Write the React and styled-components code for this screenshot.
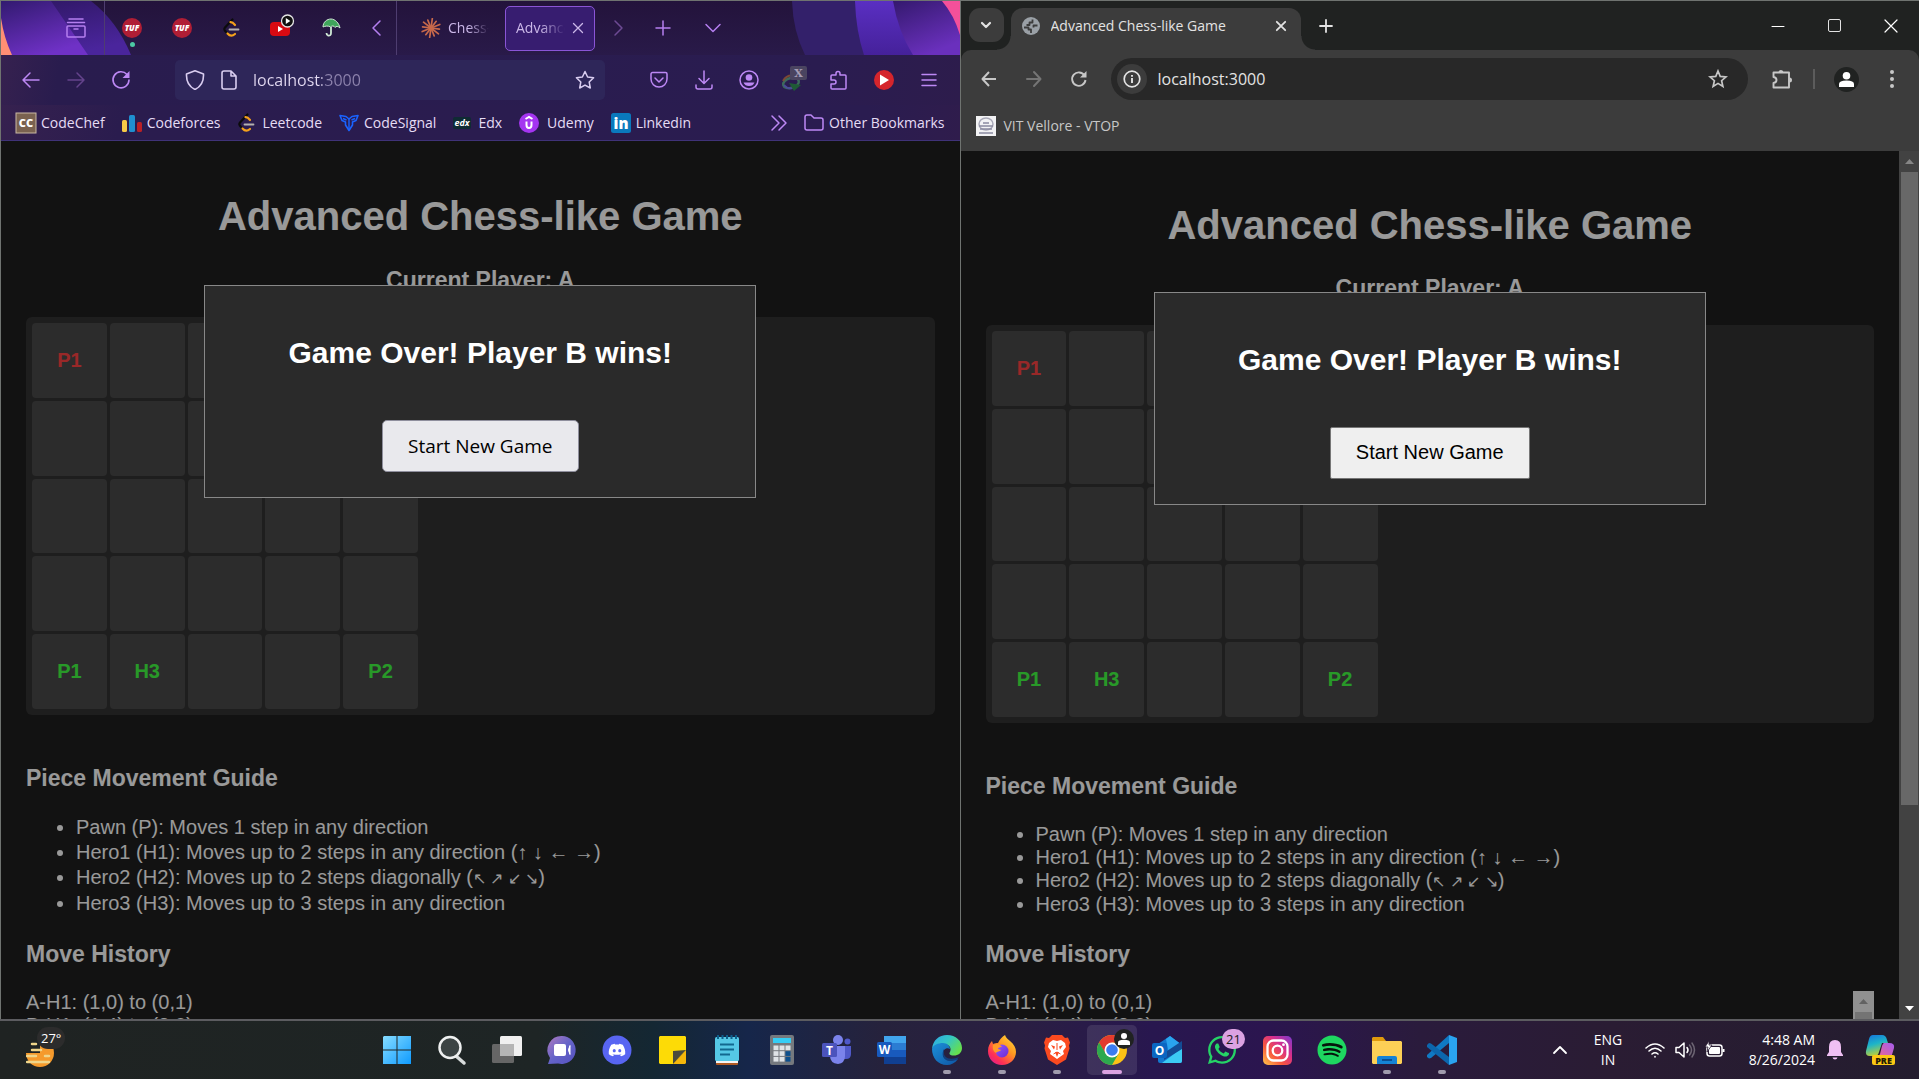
import React from "react";
import styled, { createGlobalStyle, css } from "styled-components";
import { FaDiscord, FaWhatsapp, FaSpotify } from "react-icons/fa";

const UI = `"Open Sans", "Noto Sans", sans-serif`;
const ARIAL = `"Liberation Sans", Arial, sans-serif`;

const GlobalStyle = createGlobalStyle`
  *, *::before, *::after { box-sizing: border-box; }
  body { margin: 0; background: #121212; overflow: hidden; }
  button, input { font-family: inherit; }
`;

/* ---------- desktop ---------- */

const Desktop = styled.div`
  display: flex;
  flex-direction: column;
  height: 100vh;
  font-family: ${UI};
`;

const Windows = styled.div`
  flex: 1;
  min-height: 0;
  display: grid;
  grid-template-columns: minmax(0, 1fr) minmax(0, 1fr);
  border-bottom: 2px solid #5c5c60;
`;

const Window = styled.section`
  display: flex;
  flex-direction: column;
  min-width: 0;
  min-height: 0;
  border-top: 1px solid #6f7370;
  border-left: 1px solid #6f7370;
`;

const IconButton = styled.button`
  display: flex;
  align-items: center;
  justify-content: center;
  flex: none;
  width: ${(p) => p.$w || 45}px;
  height: ${(p) => p.$h || 40}px;
  padding: 0;
  border: 0;
  background: none;
  color: ${(p) => p.$color || "inherit"};
  svg { display: block; overflow: visible; }
`;

const Spacer = styled.div`
  flex: 1;
`;

/* ---------- purple browser ---------- */

const FoxTabs = styled.div`
  position: relative;
  display: flex;
  align-items: center;
  height: 54px;
  background: linear-gradient(#23133b, #291a49);
  color: #b57ff0;
`;

const FoxArt = styled.svg`
  position: absolute;
  top: 0;
  ${(p) => (p.$side === "left" ? "left: 0;" : "right: 0;")}
  pointer-events: none;
`;

const FoxLead = styled.div`
  display: flex;
  justify-content: flex-end;
  width: 104px;
  height: 54px;
  align-items: center;
  padding-right: 6px;
  margin-right: 2px;
  border-right: 1px solid #4e3d70;
  position: relative;
`;

const Pinned = styled(IconButton)`
  position: relative;
  width: 50px;
  height: 54px;
`;

const PinDot = styled.span`
  position: absolute;
  left: 23px;
  bottom: 8px;
  width: 5px;
  height: 5px;
  border-radius: 50%;
  background: #4cc9a4;
`;

const TabDivider = styled.div`
  width: 1px;
  height: 54px;
  background: #4e3d70;
`;

const FoxTab = styled.button`
  position: relative;
  display: flex;
  align-items: center;
  gap: 7px;
  flex: none;
  height: 45px;
  width: 90px;
  padding: 0 10px;
  border-radius: 5px;
  border: 1px solid ${(p) => (p.$active ? "#8a55d6" : "transparent")};
  background: ${(p) => (p.$active ? "#371d70" : "none")};
  color: #cbb8e8;
  font-size: 14px;
  line-height: 20px;
  margin-left: ${(p) => (p.$active ? 0 : 13)}px;
  margin-right: ${(p) => (p.$active ? 0 : 5)}px;
  svg { flex: none; }
`;

const FadeLabel = styled.span`
  flex: 1;
  min-width: 0;
  overflow: hidden;
  white-space: nowrap;
  text-align: left;
  mask-image: linear-gradient(to right, #000 50%, transparent 100%);
`;

const FoxNav = styled.div`
  display: flex;
  align-items: center;
  height: 50px;
  padding: 0 8px 0 7px;
  background: linear-gradient(100deg, #36214f 0, #291c4e 60px, #2a1c50 85%, #2d1c4c);
  color: #bd88f5;
`;

const FoxUrl = styled.label`
  display: flex;
  align-items: center;
  flex: 1;
  min-width: 0;
  height: 40px;
  margin: 0 32px;
  padding: 0 10px;
  gap: 16px;
  border-radius: 5px;
  background: #2e2659;
  color: #d9cdf0;
  svg { flex: none; }
`;

const Address = styled.input`
  flex: 1;
  min-width: 0;
  padding: 0;
  border: 0;
  outline: 0;
  background: none;
  color: ${(p) => p.$color};
  font-size: 16px;
  line-height: 24px;
`;

const FoxAddress = styled(Address)`
  background: linear-gradient(to right, #e3daf2 69px, #8d83ad 69px);
  background-clip: text;
  -webkit-background-clip: text;
  -webkit-text-fill-color: transparent;
`;

const FoxMarks = styled.nav`
  display: flex;
  align-items: center;
  gap: 17px;
  height: 36px;
  padding: 0 15px;
  background: linear-gradient(100deg, #36214f 0, #2a1c4e 120px, #2a1c50 90%, #2f1c4c);
  border-bottom: 1px solid #3f3278;
`;

const Bookmark = styled.a`
  display: flex;
  align-items: center;
  gap: ${(p) => p.$gap || 5}px;
  color: ${(p) => p.$color || "#e6dcf5"};
  font-size: 14px;
  line-height: 20px;
  white-space: nowrap;
  text-decoration: none;
  svg { flex: none; overflow: visible; }
`;

/* ---------- grey browser ---------- */

const ChromeTabs = styled.div`
  display: flex;
  align-items: flex-end;
  height: 49px;
  padding-left: 8px;
  background: #202221;
  color: #e3e3e3;
`;

const TabSearch = styled(IconButton)`
  width: 35px;
  height: 34px;
  margin-bottom: 8px;
  border-radius: 11px;
  background: #3c3c3c;
`;

const ChromeTab = styled.div`
  position: relative;
  display: flex;
  align-items: center;
  gap: 11px;
  width: 290px;
  height: 42px;
  margin: 0 7px;
  padding: 0 5px 6px 11px;
  border-radius: 12px 12px 0 0;
  background: #3c3c3c;
  font-size: 14px;
  line-height: 20px;
  svg { flex: none; }
  &::before,
  &::after {
    content: "";
    position: absolute;
    bottom: 0;
    width: 14px;
    height: 14px;
  }
  &::before {
    left: -14px;
    background: radial-gradient(circle at 0 0, transparent 13px, #3c3c3c 14px);
  }
  &::after {
    right: -14px;
    background: radial-gradient(circle at 100% 0, transparent 13px, #3c3c3c 14px);
  }
`;

const TabTitle = styled.span`
  flex: 1;
  min-width: 0;
  overflow: hidden;
  white-space: nowrap;
`;

const ChromeTop = styled.div`
  background: #202221;
`;

const ChromeNav = styled.div`
  display: flex;
  align-items: center;
  height: 58px;
  padding: 0 5px 0 6px;
  border-radius: 10px 10px 0 0;
  background: #3c3c3c;
  color: #c7c7c7;
`;

const Omnibox = styled.label`
  display: flex;
  align-items: center;
  flex: 1;
  min-width: 0;
  height: 42px;
  margin: 0 11px 0 9px;
  padding: 0 20px 0 6px;
  gap: 11px;
  border-radius: 21px;
  background: #282828;
  svg { flex: none; }
`;

const InfoDot = styled.span`
  display: flex;
  align-items: center;
  justify-content: center;
  width: 30px;
  height: 30px;
  border-radius: 50%;
  background: #3c3c3c;
  color: #e3e3e3;
`;

const NavDivider = styled.div`
  width: 2px;
  height: 20px;
  margin: 0 9px;
  background: #5c5c5c;
`;

const Avatar = styled.span`
  display: flex;
  align-items: center;
  justify-content: center;
  width: 25px;
  height: 25px;
  border-radius: 50%;
  background: #202221;
`;

const ChromeMarks = styled.nav`
  display: flex;
  align-items: center;
  height: 43px;
  padding: 0 15px 7px;
  background: #3c3c3c;
`;

/* ---------- game page ---------- */

const Viewport = styled.div`
  display: flex;
  flex: 1;
  min-height: 0;
  background: #1e1e1e;
`;

const PageArea = styled.main`
  position: relative;
  flex: 1;
  min-width: 0;
  overflow: hidden;
  padding: ${(p) => (p.$fox ? 26 : 25)}px 25px 25px;
  color: #fff;
  font-family: ${ARIAL};
  font-size: 20px;
  line-height: ${(p) => (p.$fox ? 25 : 23)}px;
`;

const Title = styled.h1`
  margin: 26px 0 27px;
  font-size: 40px;
  line-height: 46px;
  text-align: center;
`;

const Turn = styled.h3`
  margin: 27px 0 23px;
  font-size: 23px;
  line-height: ${(p) => (p.$fox ? 28 : 27)}px;
  text-align: center;
`;

const Board = styled.div`
  padding: 6px;
  border-radius: 6px;
  background: #333;
`;

const Cells = styled.div`
  display: grid;
  grid-template-columns: repeat(5, 1fr);
  grid-template-rows: repeat(5, 1fr);
  gap: 3px;
  width: 386px;
  height: 386px;
`;

const Cell = styled.div`
  display: flex;
  align-items: center;
  justify-content: center;
  border-radius: 4px;
  background: #4a4a4a;
  color: ${(p) => (p.$team === "A" ? "#ff4444" : "#44ff44")};
  font-weight: bold;
`;

const Heading = styled.h3`
  margin: 23px 0;
  font-size: 23px;
  line-height: 27px;
`;

const Guide = styled.section`
  margin-top: 50px;
`;

const Rules = styled.ul`
  margin: 23px 0 25px;
  padding-left: 50px;
`;

const Arrows = styled.span`
  font-size: 16px;
`;

const History = styled.div`
  display: flex;
  justify-content: space-between;
  height: 250px;
`;

const Moves = styled.div`
  line-height: 23px;
`;

const Overlay = styled.div`
  position: absolute;
  inset: 0;
  background: rgba(0, 0, 0, 0.4);
`;

const Modal = styled.div`
  width: 552px;
  max-width: 90%;
  margin: 15% auto 0;
  padding: 25px;
  border: 1px solid #888;
  background: #2a2a2a;
  text-align: center;
`;

const ModalTitle = styled.h2`
  margin: 25px 0;
  font-size: 30px;
  line-height: 34px;
`;

const Restart = styled.button`
  height: 52px;
  margin-top: 25px;
  padding: 0 25px;
  color: #000;
  font-size: 20px;
  ${(p) =>
    p.$fox
      ? css`
          border: 1px solid #8f8f9d;
          border-radius: 5px;
          background: #e9e9ed;
          font-family: ${UI};
          font-size: 19px;
        `
      : css`
          border: 1px solid #767676;
          border-radius: 2px;
          background: #efefef;
          font-family: ${ARIAL};
        `}
`;

const Track = styled.div`
  display: flex;
  flex-direction: column;
  align-items: center;
  flex: none;
  width: ${(p) => p.$w || 20}px;
  background: ${(p) => p.$bg};
`;

const Thumb = styled.div`
  flex: ${(p) => p.$grow};
  width: 17px;
  background: ${(p) => p.$bg};
`;

const ArrowCap = styled.div`
  display: flex;
  align-items: center;
  justify-content: center;
  height: 21px;
`;

/* ---------- taskbar ---------- */

const Taskbar = styled.footer`
  display: flex;
  align-items: center;
  height: 58px;
  padding: 0 14px 0 20px;
  color: #fff;
  background: linear-gradient(
    90deg,
    #1f2322 0,
    #1e2525 28%,
    #142733 34%,
    #16264a 39%,
    #26223c 46%,
    #2a1f42 53%,
    #28174f 60%,
    #2b154f 66%,
    #2a1b3c 74%,
    #2a1c33 84%,
    #241d2f 100%
  );
`;

const Weather = styled.button`
  position: relative;
  width: 352px;
  height: 50px;
  padding: 4px 0 0 6px;
  border: 0;
  background: none;
  text-align: left;
`;

const Temp = styled.span`
  position: absolute;
  left: 17px;
  top: 2px;
  padding: 1px 4px;
  border-radius: 12px;
  background: #2c2c2c;
  color: #fff;
  font-size: 13px;
  line-height: 20px;
`;

const Apps = styled.div`
  display: flex;
  gap: 5px;
`;

const AppButton = styled.button`
  position: relative;
  display: flex;
  align-items: center;
  justify-content: center;
  width: 50px;
  height: 50px;
  padding: 0;
  border: 0;
  border-radius: 5px;
  background: ${(p) => (p.$state === "active" ? "rgba(255,255,255,.1)" : "none")};
  svg { display: block; overflow: visible; }
  &::after {
    content: "";
    position: absolute;
    bottom: 1px;
    display: ${(p) => (p.$state ? "block" : "none")};
    width: ${(p) => (p.$state === "active" ? 20 : 8)}px;
    height: 4px;
    border-radius: 2px;
    background: ${(p) => (p.$state === "active" ? "#dba2e2" : "#a09bad")};
  }
`;

const Badge = styled.span`
  position: absolute;
  top: 4px;
  right: 2px;
  width: 23px;
  height: 20px;
  border-radius: 10px;
  background: #dba2e2;
  color: #1b1b1b;
  font-size: 13px;
  line-height: 20px;
`;

const AvatarBadge = styled(Badge)`
  display: flex;
  align-items: center;
  justify-content: center;
  right: 3px;
  width: 20px;
  background: #202221;
`;

const Tray = styled.div`
  display: flex;
  align-items: center;
  gap: 10px;
`;

const TrayText = styled.div`
  width: ${(p) => p.$w}px;
  margin-right: ${(p) => p.$after || 0}px;
  font-size: 14px;
  line-height: 20px;
  text-align: ${(p) => p.$align || "center"};
`;

/* ---------- drawings ---------- */

const Svg = ({ s = 20, w, h, v, children, ...rest }) => (
  <svg width={w || s} height={h || s} viewBox={v || `0 0 ${w || s} ${h || s}`} fill="none" aria-hidden="true" {...rest}>
    {children}
  </svg>
);

const Line = ({ d, s = 20, sw = 1.5, ...rest }) => (
  <Svg s={s} stroke="currentColor" strokeWidth={sw} strokeLinecap="round" strokeLinejoin="round" {...rest}>
    <path d={d} />
  </Svg>
);

const Tuf = () => (
  <Svg s={20}>
    <circle cx="10" cy="10" r="10" fill="#b01e35" />
    <text x="10" y="13" textAnchor="middle" fontFamily="Open Sans" fontStyle="italic" fontWeight="800" fontSize="8" fill="#fff">TUF</text>
  </Svg>
);

const Leet = () => (
  <Svg s={20} strokeLinecap="round" strokeWidth="2.2">
    <path d="M10.500 1.500 2.800 9.700Q1.700 11 2.800 12.500L5.500 15.500" stroke="#0b0b0b" />
    <path d="M8.500 4.200Q10.500 4 13 7" stroke="#f5a11c" />
    <path d="M5.500 15.500Q9 19.500 13 16" stroke="#f5a11c" />
    <path d="M7.500 11.500H16.500" stroke="#b3b1b0" strokeWidth="1.800" />
  </Svg>
);

const Youtube = () => (
  <Svg w={24} h={22} v="0 3 24 22">
    <rect x="0" y="8" width="20" height="14" rx="4" fill="#d90a12" />
    <path d="M8 12v6l5-3z" fill="#fff" />
    <circle cx="17.500" cy="7" r="6" fill="#101010" stroke="#e5e5e5" strokeWidth="1.300" />
    <path d="M15.800 4v6l4.500-3z" fill="#fff" />
  </Svg>
);

const Umbrella = () => (
  <Svg s={20}>
    <path d="M1 9C1 4 5 1 9 1s8 4 9 9c-2-2-4-2-5-.5-1-2-3-2-4.500-.5C6.500 7.500 3 8 1 9z" fill="#3fa45b" stroke="#cfe8d5" strokeWidth="1" />
    <path d="M9 9v6q0 3-3 2.500-1.500-.5-1.500-2.500" stroke="#cfe8d5" strokeWidth="1.800" />
  </Svg>
);

const Burst = () => (
  <Svg s={20} stroke="#c8694b" strokeWidth="1.700" strokeLinecap="round">
    {Array.from({ length: 12 }, (_, i) => (
      <path key={i} d={i % 2 ? "M10 10V1.500" : "M10 10V.5"} transform={`rotate(${i * 30 + 8} 10 10)`} />
    ))}
  </Svg>
);

const Idm = () => (
  <Svg w={26} h={28}>
    <ellipse cx="10" cy="17" rx="8" ry="5" stroke="#3c6a5c" strokeWidth="2.500" transform="rotate(-15 10 17)" />
    <path d="M2 15q4-7 12-5" stroke="#7b4a35" strokeWidth="2" />
    <path d="M3 19q3 4 8 3" stroke="#4a4a9a" strokeWidth="2" />
    <path d="M8 17l12 2-7 6z" fill="#1f5a36" />
    <rect x="9" y="0" width="17" height="14" rx="2" fill="#4a4460" />
    <text x="17.500" y="11" textAnchor="middle" fontFamily="DejaVu Serif" fontWeight="700" fontSize="11" fill="#a49cb5">X</text>
  </Svg>
);

const puzzleFox = "M7 5V3.500a2 2 0 0 1 4 0V5h5a1 1 0 0 1 1 1v12a1 1 0 0 1-1 1H3a1 1 0 0 1-1-1v-4h3a2 2 0 0 0 0-4H2V6a1 1 0 0 1 1-1z";
const starPath = "M10 1.500l2.600 5.500 6 .8-4.400 4.200 1.100 6-5.300-2.900L4.700 18l1.100-6L1.400 7.800l6-.8z";

const ChromeStar = () => (
  <Svg s={20}>
    <path d="M10 2l2.200 5.400 5.800.5-4.400 3.800 1.300 5.700-4.900-3-4.900 3 1.300-5.700L2 7.900l5.800-.5z" stroke="currentColor" strokeWidth="1.700" />
  </Svg>
);

const Person = ({ s = 15 }) => (
  <Svg s={s} v="0 0 15 15">
    <circle cx="7.500" cy="3.800" r="3.800" fill="#fff" />
    <path d="M0 15v-3q0-3.500 7.500-3.500T15 12v3z" fill="#fff" />
  </Svg>
);

const Triangle = ({ color, down }) => (
  <Svg w={9} h={5}><path d={down ? "M0 0h9L4.500 5z" : "M0 5h9L4.500 0z"} fill={color} /></Svg>
);

const Win = () => (
  <Svg s={28}>
    <defs><linearGradient id="win" x1="0" y1="0" x2="1" y2="1"><stop stopColor="#86dcff" /><stop offset="1" stopColor="#0f9bff" /></linearGradient></defs>
    <path d="M1 0h12.500v13.500H0V1zM14.500 0H28v13.500H14.500zM0 14.500h13.500V28H0zM14.500 14.500H28V28H14.500z" fill="url(#win)" />
  </Svg>
);

const Search = () => (
  <Svg s={28}>
    <path d="M18 20l8 7" stroke="#d8dcdc" strokeWidth="3.500" strokeLinecap="round" />
    <circle cx="12" cy="11.500" r="10.500" fill="#3c4444" stroke="#eef0f0" strokeWidth="2.500" />
  </Svg>
);

const TaskView = () => (
  <Svg s={30}>
    <rect x="0" y="9" width="22" height="19" rx="1.500" fill="#666" />
    <rect x="8" y="1" width="22" height="20" rx="1.500" fill="#f0f0f0" />
    <path d="M8 9h14v12H8z" fill="#b5b5b5" />
  </Svg>
);

const Chat = () => (
  <Svg s={28}>
    <defs><linearGradient id="chat" x1="0" y1="0" x2="1" y2="1"><stop stopColor="#b07ac0" /><stop offset=".5" stopColor="#6463c8" /><stop offset="1" stopColor="#5651c0" /></linearGradient></defs>
    <path d="M14 0a14 14 0 1 1-4 27.500L0 28l2-6A14 14 0 0 1 14 0z" fill="url(#chat)" />
    <rect x="6" y="8" width="12" height="12" rx="2" fill="#fff" />
    <path d="M22 9.500v9q-3-4.500 0-9z" fill="#fff" stroke="#fff" />
  </Svg>
);

const DiscordRound = () => (
  <Svg s={30}>
    <circle cx="15" cy="15" r="14.500" fill="#5865f2" />
    <FaDiscord x="6" y="6" size={18} color="#fff" />
  </Svg>
);

const Sticky = () => (
  <Svg w={27} h={28}>
    <path d="M1 0h25l1 1v13L14 28H1l-1-1V1z" fill="#fddb06" />
    <path d="M14 28V15l13-1z" fill="#4a4a3c" />
    <path d="M27 14v13l-1 1H14z" fill="#f5b70a" />
  </Svg>
);

const Notepad = () => (
  <Svg w={24} h={30}>
    <rect x="1" y="25" width="22" height="5" rx="1" fill="#b05a24" />
    <rect x="1" y="24" width="22" height="4" fill="#f4f4f4" />
    <rect x="0" y="2" width="24" height="24" rx="1.500" fill="#55c8e6" />
    <path d="M3 0v4M7.500 0v4M12 0v4M16.500 0v4M21 0v4" stroke="#0e5f8c" strokeWidth="2" />
    <path d="M5 9.500h14M5 14.500h14M5 19.500h10" stroke="#12688f" strokeWidth="2" />
  </Svg>
);

const Calc = () => (
  <Svg w={24} h={30}>
    <rect width="24" height="30" rx="2" fill="#75797e" />
    <rect x="3" y="3" width="18" height="5" fill="#35cdf5" />
    {[0, 1, 2].map((r) => [0, 1, 2].map((c) => <rect key={`${r}${c}`} x={3.500 + c * 6} y={10.500 + r * 5.700} width="5" height="4.700" fill={c === 2 && r ? "#0d4f8c" : "#dfe3e6"} />))}
  </Svg>
);

const Letter = ({ x, y, c }) => (
  <text x={x} y={y} textAnchor="middle" fontFamily="Open Sans" fontWeight="700" fontSize="12" fill="#fff">{c}</text>
);

const Teams = () => (
  <Svg s={30}>
    <circle cx="16" cy="5" r="5" fill="#7b83eb" />
    <circle cx="25.500" cy="6.500" r="3" fill="#5059c9" />
    <path d="M21 11h8v8q0 5-5 5h-3z" fill="#5059c9" />
    <path d="M8 11h15v10q0 7-7 8-8-1-8-8z" fill="#7b83eb" />
    <rect x="0" y="8" width="15" height="14" rx="1.500" fill="#4b53bc" />
    <Letter x={7.500} y={19.500} c="T" />
  </Svg>
);

const Word = () => (
  <Svg s={30}>
    <rect x="7" y="1" width="22" height="8" fill="#41a5ee" />
    <rect x="7" y="8" width="22" height="7" fill="#2b7cd3" />
    <rect x="7" y="15" width="22" height="7" fill="#185abd" />
    <rect x="7" y="22" width="22" height="7" fill="#103f91" />
    <rect x="0" y="7" width="15" height="15" rx="1.500" fill="#185abd" />
    <Letter x={7.500} y={19} c="W" />
  </Svg>
);

const Edge = () => (
  <Svg s={30}>
    <defs>
      <linearGradient id="edgeA" x1="0" y1="0" x2="1" y2=".6"><stop stopColor="#2fa4e7" /><stop offset=".5" stopColor="#33c6c6" /><stop offset="1" stopColor="#66df4e" /></linearGradient>
      <linearGradient id="edgeB" x1="0" y1="0" x2="1" y2="1"><stop stopColor="#1c90d8" /><stop offset="1" stopColor="#0f55a5" /></linearGradient>
    </defs>
    <path d="M0 14C1 5 7 0 15 0c9 0 15 6 15 13 0 5-4 7.500-8 7.500-5 0-5-2-4-3.500 2-4-1-8-6-8-6 0-11 2-12 5z" fill="url(#edgeA)" />
    <path d="M0 14c1-4 6-6 11-6 4 0 7 3 7 6-3-2-7 0-7 5 0 6 7 8 15 5-3 4-7 6-11 6C6 30 0 23 0 14z" fill="url(#edgeB)" />
    <path d="M12 14c-3 5-1 12 6 12 4 0 7-1 9-4-7 3-14 2-15-3z" fill="#123f7d" />
  </Svg>
);

const Firefox = () => (
  <Svg s={30}>
    <defs>
      <linearGradient id="ffA" x1="1" y1="0" x2=".2" y2="1"><stop stopColor="#ffe63c" /><stop offset=".45" stopColor="#ff9520" /><stop offset=".8" stopColor="#ff2f55" /><stop offset="1" stopColor="#e0208a" /></linearGradient>
      <linearGradient id="ffB" x1="0" y1="0" x2="1" y2="1"><stop stopColor="#9058ff" /><stop offset="1" stopColor="#6d2bd0" /></linearGradient>
    </defs>
    <path d="M18 0c1 3 3 4 5 6 4 3 6 7 6 11 0 7-6 13-14 13S1 24 1 16c0-5 2-8 4-10l1 3c2-1 3-1 5-1 2-4 4-6 7-8z" fill="url(#ffA)" />
    <circle cx="15" cy="16" r="6.500" fill="url(#ffB)" />
    <path d="M6 10c3-2 7-1 9 2-3 0-4 1-4 2l3 1c-1 2-4 1-5 3-2-1-4-4-3-8z" fill="#ff9a28" />
  </Svg>
);

const Brave = () => (
  <Svg w={26} h={30}>
    <path d="M8 0h10l3 3 3-.500 2 5-1 3 .500 3-3.500 11L13 30 4 24.500.500 13.500l.500-3-1-3 2-5L5 3z" fill="#fb4a20" />
    <path d="M9 5l4 1 4-1 4 3 1 4-3 4 1 3-7 5-7-5 1-3-3-4 1-4z" fill="#fff" />
    <path d="M7 10l4 1.500-1 3zM19 10l-4 1.500 1 3zM11 17h4l-2 5z" fill="#fb4a20" />
    <path d="M13 8v7M9.500 19l3.500-2 3.500 2" stroke="#fb4a20" />
  </Svg>
);

const ChromeLogo = () => (
  <Svg s={30}>
    <circle cx="15" cy="15" r="15" fill="#fbc116" />
    <path d="M2 7.500A15 15 0 0 1 28 7.500H15L8.500 19z" fill="#e33b2e" />
    <path d="M2 7.500A15 15 0 0 0 15 30l6.500-11.200L9 19z" fill="#2da94f" />
    <circle cx="15" cy="15" r="7.500" fill="#fff" />
    <circle cx="15" cy="15" r="5.800" fill="#3b7cf0" />
  </Svg>
);

const Outlook = () => (
  <Svg s={30}>
    <path d="M6 9 18 1l12 9v16q0 2-2 2H8q-2 0-2-2z" fill="#1278cf" />
    <path d="M14 4l4-3 12 9-13 9z" fill="#2aa4ee" />
    <path d="M30 11v15q0 2-2 2H10l20-15z" fill="#3ccbf4" />
    <path d="M12 18l18-12v8L12 25z" fill="#134b94" />
    <rect x="0" y="8" width="15" height="15" rx="2" fill="#0a66c2" />
    <Letter x={7.500} y={20} c="O" />
  </Svg>
);

const Insta = () => (
  <Svg s={29}>
    <defs><linearGradient id="ig" x1="0" y1="1" x2="1" y2="0"><stop stopColor="#ffc94a" /><stop offset=".35" stopColor="#f8573c" /><stop offset=".65" stopColor="#d62e8c" /><stop offset="1" stopColor="#7a3ad0" /></linearGradient></defs>
    <rect width="29" height="29" rx="5" fill="url(#ig)" />
    <rect x="4.500" y="4.500" width="20" height="20" rx="6" stroke="#fff" strokeWidth="2.300" />
    <circle cx="14.500" cy="14.500" r="4.800" stroke="#fff" strokeWidth="2.300" />
    <circle cx="20.500" cy="8.700" r="1.400" fill="#fff" />
  </Svg>
);

const SpotifyRound = () => (
  <Svg s={30}>
    <circle cx="15" cy="15" r="13" fill="#06150b" />
    <FaSpotify x="0" y="0" size={30} color="#1ed760" />
  </Svg>
);

const Folder = () => (
  <Svg w={30} h={28}>
    <path d="M1 1h10l3 4h-14V2z" fill="#e09a0c" />
    <path d="M0 5h29l1 1v21l-1 1H1l-1-1z" fill="#fdd056" />
    <path d="M5 28v-6q0-2 2-2h16q2 0 2 2v6z" fill="#1583d6" />
    <path d="M10 24h10" stroke="#0b4f93" strokeWidth="2" />
  </Svg>
);

const Code = () => (
  <Svg s={30}>
    <path d="M0 20 22 0v8L4 23l-2 .5L0 22z" fill="#1079c4" />
    <path d="M0 10l2-2 2 .5L22 22v8L0 12z" fill="#0c66ad" />
    <path d="M22 0l8 3v24l-8 3z" fill="#2aa4f0" />
  </Svg>
);

const Copilot = () => (
  <Svg w={30} h={30}>
    <defs>
      <linearGradient id="cpA" x1="0" y1="0" x2=".3" y2="1"><stop stopColor="#1673dd" /><stop offset=".5" stopColor="#1db5c8" /><stop offset="1" stopColor="#b8cf3b" /></linearGradient>
      <linearGradient id="cpB" x1="1" y1="0" x2="0" y2="1"><stop stopColor="#a45cf0" /><stop offset="1" stopColor="#f06a8a" /></linearGradient>
    </defs>
    <path d="M8 0h9q4 0 5 5l1 3h-6l-3 9q-1 4-4 4H5q-5 0-4-5L4 4q1-4 4-4z" fill="url(#cpA)" />
    <path d="M19 8h5q6 0 5 5l-3 10H11q3-1 4-4l2-8q1-3 2-3z" fill="url(#cpB)" />
    <rect x="7" y="20" width="23" height="10" rx="2" fill="#fbc814" />
    <text x="18.500" y="28.500" textAnchor="middle" fontFamily="Open Sans" fontWeight="800" fontSize="9" fill="#241d05">PRE</text>
  </Svg>
);

/* ---------- data ---------- */

const bookmarks = [
  ["CodeChef", <Svg s={20}><rect width="20" height="20" fill="#7a6250" stroke="#c9b8a3" /><text x="10" y="14" textAnchor="middle" fontFamily="Open Sans" fontWeight="800" fontSize="11" fill="#fff">CC</text></Svg>],
  ["Codeforces", <Svg s={20}><rect x="0" y="7" width="5" height="12" rx="1.500" fill="#f6c947" /><rect x="7" y="2" width="6" height="17" rx="1.500" fill="#1f8fd0" /><rect x="15" y="9" width="5" height="10" rx="1.500" fill="#b92026" /></Svg>],
  ["Leetcode", <Leet />],
  ["CodeSignal", <Svg s={20}><path d="M1 2.500l6 1 3 2.500 3-2.500 6-1-2 5-3.500 1.500V12L10 17.500 6.500 12V9L3 7.500z" stroke="#1a63ff" strokeWidth="1.600" strokeLinejoin="round" /><path d="M4 5.500l3.500 1.500M16 5.500l-3.500 1.500M10 6v10" stroke="#1a63ff" strokeWidth="1.400" /></Svg>],
  ["Edx", <Svg s={20}><rect y="4" width="18" height="12" rx="2" fill="#0f2b33" /><text x="9" y="13" textAnchor="middle" fontFamily="Open Sans" fontStyle="italic" fontWeight="700" fontSize="9" fill="#fff">edx</text></Svg>],
  ["Udemy", <Svg s={20}><circle cx="10" cy="10" r="10" fill="#a435f0" /><path d="M6.500 6 10 4l3.500 2M7.500 8.500V12q0 3 2.500 3t2.500-3V8.500" stroke="#fff" strokeWidth="2" /></Svg>, 8],
  ["Linkedin", <Svg s={20}><rect width="20" height="20" rx="2.500" fill="#0a79bd" /><text x="10" y="16" textAnchor="middle" fontFamily="Open Sans" fontWeight="800" fontSize="15" fill="#fff">in</text></Svg>],
];

const pieces = {
  0: ["A", "P1"],
  20: ["B", "P1"],
  21: ["B", "H3"],
  24: ["B", "P2"],
};

const rules = [
  ["Pawn (P): Moves 1 step in any direction"],
  ["Hero1 (H1): Moves up to 2 steps in any direction (↑ ↓ ← →)"],
  ["Hero2 (H2): Moves up to 2 steps diagonally (", "↖ ↗ ↙ ↘", ")"],
  ["Hero3 (H3): Moves up to 3 steps in any direction"],
];

const apps = [
  ["Start", <Win />],
  ["Search", <Search />],
  ["Task view", <TaskView />],
  ["Chat", <Chat />],
  ["Discord", <DiscordRound />],
  ["Sticky Notes", <Sticky />],
  ["Notepad", <Notepad />],
  ["Calculator", <Calc />],
  ["Teams", <Teams />],
  ["Word", <Word />],
  ["Edge", <Edge />, "open"],
  ["Firefox", <Firefox />, "open"],
  ["Brave", <Brave />, "open"],
  ["Chrome", <><ChromeLogo /><AvatarBadge><Person s={12} /></AvatarBadge></>, "active"],
  ["Outlook", <Outlook />],
  ["WhatsApp", <><FaWhatsapp size={32} color="#25d366" /><Badge>21</Badge></>],
  ["Instagram", <Insta />],
  ["Spotify", <SpotifyRound />],
  ["File Explorer", <Folder />, "open"],
  ["Visual Studio Code", <Code />, "open"],
];

/* ---------- parts ---------- */

function GamePage({ fox }) {
  return (
    <PageArea $fox={fox}>
      <Title>Advanced Chess-like Game</Title>
      <Turn $fox={fox}>Current Player: A</Turn>
      <Board>
        <Cells>
          {Array.from({ length: 25 }, (_, i) => (
            <Cell key={i} $team={pieces[i]?.[0]}>{pieces[i]?.[1]}</Cell>
          ))}
        </Cells>
      </Board>
      <Guide>
        <Heading>Piece Movement Guide</Heading>
        <Rules>
          {rules.map(([text, arrows, end]) => (
            <li key={text}>{text}{arrows && <Arrows>{arrows}</Arrows>}{end}</li>
          ))}
        </Rules>
      </Guide>
      <Heading>Move History</Heading>
      <History>
        <Moves>
          <div>A-H1: (1,0) to (0,1)</div>
          <div>B-H1: (1,4) to (2,0)</div>
        </Moves>
        {!fox && (
          <Track $w={21} $bg="#f1f1f1">
            <ArrowCap><Triangle color="#a3a3a3" /></ArrowCap>
            <Thumb $grow={1} $bg="#c1c1c1" />
          </Track>
        )}
      </History>
      <Overlay>
        <Modal role="dialog" aria-label="Game over">
          <ModalTitle>Game Over! Player B wins!</ModalTitle>
          <Restart $fox={fox}>Start New Game</Restart>
        </Modal>
      </Overlay>
    </PageArea>
  );
}

function FoxWindow() {
  return (
    <Window>
      <FoxTabs>
        <FoxArt $side="left" width="140" height="54">
          <defs>
            <linearGradient id="fa" x1="0" y1="0" x2=".5" y2="1"><stop stopColor="#321a70" /><stop offset="1" stopColor="#6f31c6" /></linearGradient>
            <linearGradient id="fb" x1="0" y1="0" x2=".5" y2="1"><stop stopColor="#2d1660" /><stop offset="1" stopColor="#4a259c" /></linearGradient>
          </defs>
          <path d="M0 0h90q26 20 40 54H0z" fill="url(#fb)" />
          <path d="M0 0h50l37 54H0z" fill="url(#fa)" />
          <path d="M0 17q3 20 11 37H0z" fill="#ff8f74" />
        </FoxArt>
        <FoxArt $side="right" width="170" height="54">
          <defs>
            <linearGradient id="fc" x1="0" y1="0" x2=".5" y2="1"><stop stopColor="#34196e" /><stop offset="1" stopColor="#6a30bd" /></linearGradient>
            <linearGradient id="fd" x1="0" y1="0" x2="0" y2="1"><stop stopColor="#5a2fc2" /><stop offset="1" stopColor="#45219a" /></linearGradient>
          </defs>
          <path d="M2 0q1 30 13 54h155V0z" fill="#33206a" />
          <path d="M65 0q1 30 9 54h96V0z" fill="url(#fd)" />
          <path d="M103 0q5 30 20 54h47V0z" fill="url(#fc)" />
          <path d="M152 0q12 14 18 34V0z" fill="#f4509a" />
        </FoxArt>
        <FoxLead>
          <IconButton aria-label="Firefox View">
            <Line s={20} d="M3 1h14M1.500 4.500h17M2 8h16a1 1 0 0 1 1 1v9a1 1 0 0 1-1 1H2a1 1 0 0 1-1-1V9a1 1 0 0 1 1-1zM8 11h4" />
          </IconButton>
        </FoxLead>
        <Pinned aria-label="takeUforward"><Tuf /><PinDot /></Pinned>
        <Pinned aria-label="takeUforward"><Tuf /></Pinned>
        <Pinned aria-label="Leetcode"><Leet /></Pinned>
        <Pinned aria-label="YouTube"><Youtube /></Pinned>
        <Pinned aria-label="Umbrella"><Umbrella /></Pinned>
        <IconButton $w={39} aria-label="Scroll tabs left"><Line s={16} d="M11 1 4 8l7 7" /></IconButton>
        <TabDivider />
        <FoxTab><Burst /><FadeLabel>Chess-</FadeLabel></FoxTab>
        <FoxTab $active>
          <FadeLabel>Advanced Chess-like Game</FadeLabel>
          <Line s={12} sw={1.3} d="M1.500 1.500l9 9M10.500 1.500l-9 9" />
        </FoxTab>
        <IconButton $color="#6d4a94" aria-label="Scroll tabs right"><Line s={16} d="M5 1l7 7-7 7" /></IconButton>
        <IconButton aria-label="New tab"><Line s={16} d="M8 1v14M1 8h14" /></IconButton>
        <IconButton $w={56} aria-label="List all tabs"><Line s={16} d="M1 4.500l7 7 7-7" /></IconButton>
        <Spacer />
        <IconButton $w={57} $color="#cdb9ee" aria-label="Minimize"><Line s={12} sw={1.2} d="M0 5h12" /></IconButton>
        <IconButton $w={57} $color="#cdb9ee" aria-label="Maximize"><Line s={12} sw={1.2} d="M.500.500h11v11H.500z" /></IconButton>
        <IconButton $w={57} $color="#cdb9ee" aria-label="Close"><Line s={12} sw={1.2} d="M0 0l12 12M12 0L0 12" /></IconButton>
      </FoxTabs>
      <FoxNav>
        <IconButton aria-label="Back"><Line s={18} d="M17 9H1M8 2 1 9l7 7" /></IconButton>
        <IconButton $color="#64438c" aria-label="Forward"><Line s={18} d="M1 9h16M10 2l7 7-7 7" /></IconButton>
        <IconButton aria-label="Reload">
          <Svg s={20}><path d="M16 4.500A8 8 0 1 0 18 10" stroke="currentColor" strokeWidth="1.600" strokeLinecap="round" /><path d="M18.500 1v7h-7z" fill="currentColor" /></Svg>
        </IconButton>
        <FoxUrl>
          <Line s={20} d="M10 .8 18.500 4q.5 11-8.500 15.500Q1 15 1.500 4z" sw={1.6} />
          <Line w={16} h={20} d="M3 1h7l5 5v11a2 2 0 0 1-2 2H3a2 2 0 0 1-2-2V3a2 2 0 0 1 2-2zM10 1v5h5" sw={1.6} />
          <FoxAddress aria-label="Address" $color="#e3daf2" defaultValue="localhost:3000" />
          <Line s={20} d={starPath} />
        </FoxUrl>
        <IconButton aria-label="Pocket"><Line s={18} d="M2.500 1.500h13a1.500 1.500 0 0 1 1.500 1.500v5a8 8 0 0 1-16 0V3a1.500 1.500 0 0 1 1.500-1.500zM5 7l4 4 4-4" /></IconButton>
        <IconButton aria-label="Downloads"><Line s={18} d="M9 0v12M4 7.500 9 12.500l5-5M1 14v2a2 2 0 0 0 2 2h12a2 2 0 0 0 2-2v-2" /></IconButton>
        <IconButton aria-label="Account">
          <Svg s={20}><circle cx="10" cy="10" r="9" stroke="currentColor" strokeWidth="1.500" /><circle cx="10" cy="7.500" r="3.300" fill="currentColor" /><path d="M4.500 12.500h11q-1.500 3.500-5.500 3.500t-5.500-3.500z" fill="currentColor" /></Svg>
        </IconButton>
        <IconButton aria-label="Download manager"><Idm /></IconButton>
        <IconButton aria-label="Extensions"><Line s={20} d={puzzleFox} /></IconButton>
        <IconButton aria-label="Video downloader"><Svg s={20}><circle cx="10" cy="10" r="10" fill="#d5252c" /><path d="M6 4.500v11l9-5.500z" fill="#fff" /></Svg></IconButton>
        <IconButton aria-label="Menu"><Line s={16} d="M1 2.500h14M1 8h14M1 13.500h14" /></IconButton>
      </FoxNav>
      <FoxMarks>
        {bookmarks.map(([name, icon, gap]) => <Bookmark key={name} href="#" $gap={gap}>{icon}{name}</Bookmark>)}
        <Spacer />
        <IconButton $w={16} $h={24} $color="#bd88f5" aria-label="More bookmarks"><Line s={16} d="M1 1l7 7-7 7M8 1l7 7-7 7" /></IconButton>
        <Bookmark href="#">
          <Line s={20} color="#bd88f5" d="M1 4a2 2 0 0 1 2-2h4l3 3h7a2 2 0 0 1 2 2v8a2 2 0 0 1-2 2H3a2 2 0 0 1-2-2z" />
          Other Bookmarks
        </Bookmark>
      </FoxMarks>
      <Viewport><GamePage fox /></Viewport>
    </Window>
  );
}

function ChromeWindow() {
  return (
    <Window>
      <ChromeTabs>
        <TabSearch aria-label="Search tabs"><Line s={12} sw={2.2} d="M2 4l4 4 4-4" /></TabSearch>
        <ChromeTab>
          <Svg s={18}>
            <circle cx="9" cy="9" r="9" fill="#9aa0a6" />
            <path d="M10.500 2.500v3H7.500v2.500H4.500M2 10.500h4.500v2H9v3.500M15.500 8.500h-4v2" stroke="#3c3c3c" strokeWidth="1.800" strokeLinejoin="round" />
          </Svg>
          <TabTitle>Advanced Chess-like Game</TabTitle>
          <IconButton $w={30} $h={30} aria-label="Close tab"><Line s={10} sw={1.8} d="M.800.800l8.400 8.400M9.200.800.800 9.200" /></IconButton>
        </ChromeTab>
        <IconButton $w={36} $h={49} aria-label="New tab"><Line s={12} sw={1.8} d="M6 0v12M0 6h12" /></IconButton>
        <Spacer />
        <IconButton $w={57} $h={49} $color="#fff" aria-label="Minimize"><Line s={12} sw={1} d="M0 6.500h12" /></IconButton>
        <IconButton $w={56} $h={49} $color="#e3e3e3" aria-label="Maximize"><Svg s={13}><rect x=".5" y=".5" width="12" height="12" rx="1.500" stroke="currentColor" /></Svg></IconButton>
        <IconButton $w={57} $h={49} $color="#fff" aria-label="Close"><Line s={12} sw={1.2} d="M0 0l12 12M12 0L0 12" /></IconButton>
      </ChromeTabs>
      <ChromeTop>
        <ChromeNav>
          <IconButton aria-label="Back"><Line s={14} sw={2} strokeLinecap="butt" d="M14 7H1M7 0 0.500 7l6.500 7" /></IconButton>
          <IconButton $color="#757575" aria-label="Forward"><Line s={14} sw={2} d="M0 7h13M7 0l6.500 7L7 14" /></IconButton>
          <IconButton aria-label="Reload">
            <Svg s={16}><path d="M13.500 4.500A6.700 6.700 0 1 0 14.500 9" stroke="currentColor" strokeWidth="1.900" /><path d="M15.500 0v6.500H9z" fill="currentColor" /></Svg>
          </IconButton>
          <Omnibox>
            <InfoDot><Svg s={18}><circle cx="9" cy="9" r="7.800" stroke="currentColor" strokeWidth="1.700" /><path d="M9 8v5M9 5v1.700" stroke="currentColor" strokeWidth="1.900" /></Svg></InfoDot>
            <Address aria-label="Address" $color="#e3e3e3" defaultValue="localhost:3000" />
            <ChromeStar />
          </Omnibox>
          <IconButton aria-label="Extensions">
            <Svg s={20}><path d="M1.500 3.500h15.500v15H1.500v-4.500q3-.500 3-3t-3-3z" stroke="currentColor" strokeWidth="1.900" strokeLinejoin="round" /><path d="M6.500 3.500a2.500 2.500 0 0 1 5 0zM17.500 8.500a2.500 2.500 0 0 1 0 5z" fill="currentColor" /></Svg>
          </IconButton>
          <NavDivider />
          <IconButton aria-label="Profile"><Avatar><Person /></Avatar></IconButton>
          <IconButton aria-label="Menu"><Svg w={4} h={18}><circle cx="2" cy="2" r="2" fill="currentColor" /><circle cx="2" cy="9" r="2" fill="currentColor" /><circle cx="2" cy="16" r="2" fill="currentColor" /></Svg></IconButton>
        </ChromeNav>
      </ChromeTop>
      <ChromeMarks>
        <Bookmark href="#" $color="#c7c7c7" $gap={8}>
          <Svg s={20}><rect width="20" height="20" fill="#f2f2f4" /><ellipse cx="10" cy="8" rx="7" ry="6" stroke="#a9a9b8" strokeWidth="1.500" /><path d="M3 10h14M4 13h12M3 17h14M7 7h6" stroke="#8b8ba0" strokeWidth="1.300" /></Svg>
          VIT Vellore - VTOP
        </Bookmark>
      </ChromeMarks>
      <Viewport>
        <GamePage />
        <Track $bg="#424242">
          <ArrowCap><Triangle color="#868686" /></ArrowCap>
          <Thumb $grow={633} $bg="#686868" />
          <Thumb $grow={193} $bg="transparent" />
          <ArrowCap><Triangle color="#fff" down /></ArrowCap>
        </Track>
      </Viewport>
    </Window>
  );
}

export default function App() {
  return (
    <Desktop>
      <GlobalStyle />
      <Windows>
        <FoxWindow />
        <ChromeWindow />
      </Windows>
      <Taskbar>
        <Weather aria-label="Weather">
          <Svg w={30} h={34}>
            <circle cx="14" cy="20" r="14" fill="#f59a2c" />
            <path d="M0 6h14v14H0z" fill="#1f2322" />
            <path d="M6 11h4M6 17h9M1 23h9M19 23h4M1 29h22" stroke="#efd58a" strokeWidth="2.500" strokeLinecap="round" />
          </Svg>
          <Temp>27°</Temp>
        </Weather>
        <Apps>
          {apps.map(([name, icon, state]) => (
            <AppButton key={name} aria-label={name} $state={state}>{icon}</AppButton>
          ))}
        </Apps>
        <Spacer />
        <Tray>
          <IconButton $w={30} $color="#fff" aria-label="Hidden icons"><Line s={14} sw={1.8} d="M1 10l6-6 6 6" /></IconButton>
          <TrayText $w={46} $after={4}>ENG<br />IN</TrayText>
          <IconButton $w={20} $color="#fff" aria-label="Wi-Fi">
            <Line s={20} sw={1.600} d="M1 8q9-8 18 0M4 11q6-5.500 12 0M7 14q3-2.500 6 0M10 16.500v.5" />
          </IconButton>
          <IconButton $w={20} $color="#fff" aria-label="Volume">
            <Svg s={20} strokeLinecap="round" strokeLinejoin="round" strokeWidth="1.500"><path d="M1 7.500h3L9 3v14l-5-4.500H1zM12 7.500q2 2.500 0 5" stroke="#fff" /><path d="M14.500 5q4 5 0 10M17 3q5 7 0 14" stroke="#6d6573" /></Svg>
          </IconButton>
          <IconButton $w={20} $color="#fff" aria-label="Battery">
            <Svg s={20}><rect x="2" y="5" width="15" height="11" rx="2.500" stroke="#fff" strokeWidth="1.500" /><rect x="4" y="7" width="11" height="7" rx="1" fill="#fff" /><path d="M18.500 9v3" stroke="#fff" strokeWidth="2" /><path d="M4 1 0 7h3l-1 5 5-7H4z" fill="#fff" stroke="#2a1c33" strokeWidth=".8" /></Svg>
          </IconButton>
          <TrayText $w={80} $align="right">4:48 AM<br />8/26/2024</TrayText>
          <IconButton $w={20} aria-label="Notifications">
            <Svg w={18} h={20}><path d="M9 0q6 0 6 7v5l2 3v1H1v-1l2-3V7q0-7 6-7z" fill="#efbff3" /><path d="M6.500 17.500h5q-.500 2-2.500 2t-2.500-2z" fill="#efbff3" /></Svg>
          </IconButton>
          <IconButton $w={50} aria-label="Copilot"><Copilot /></IconButton>
        </Tray>
      </Taskbar>
    </Desktop>
  );
}
